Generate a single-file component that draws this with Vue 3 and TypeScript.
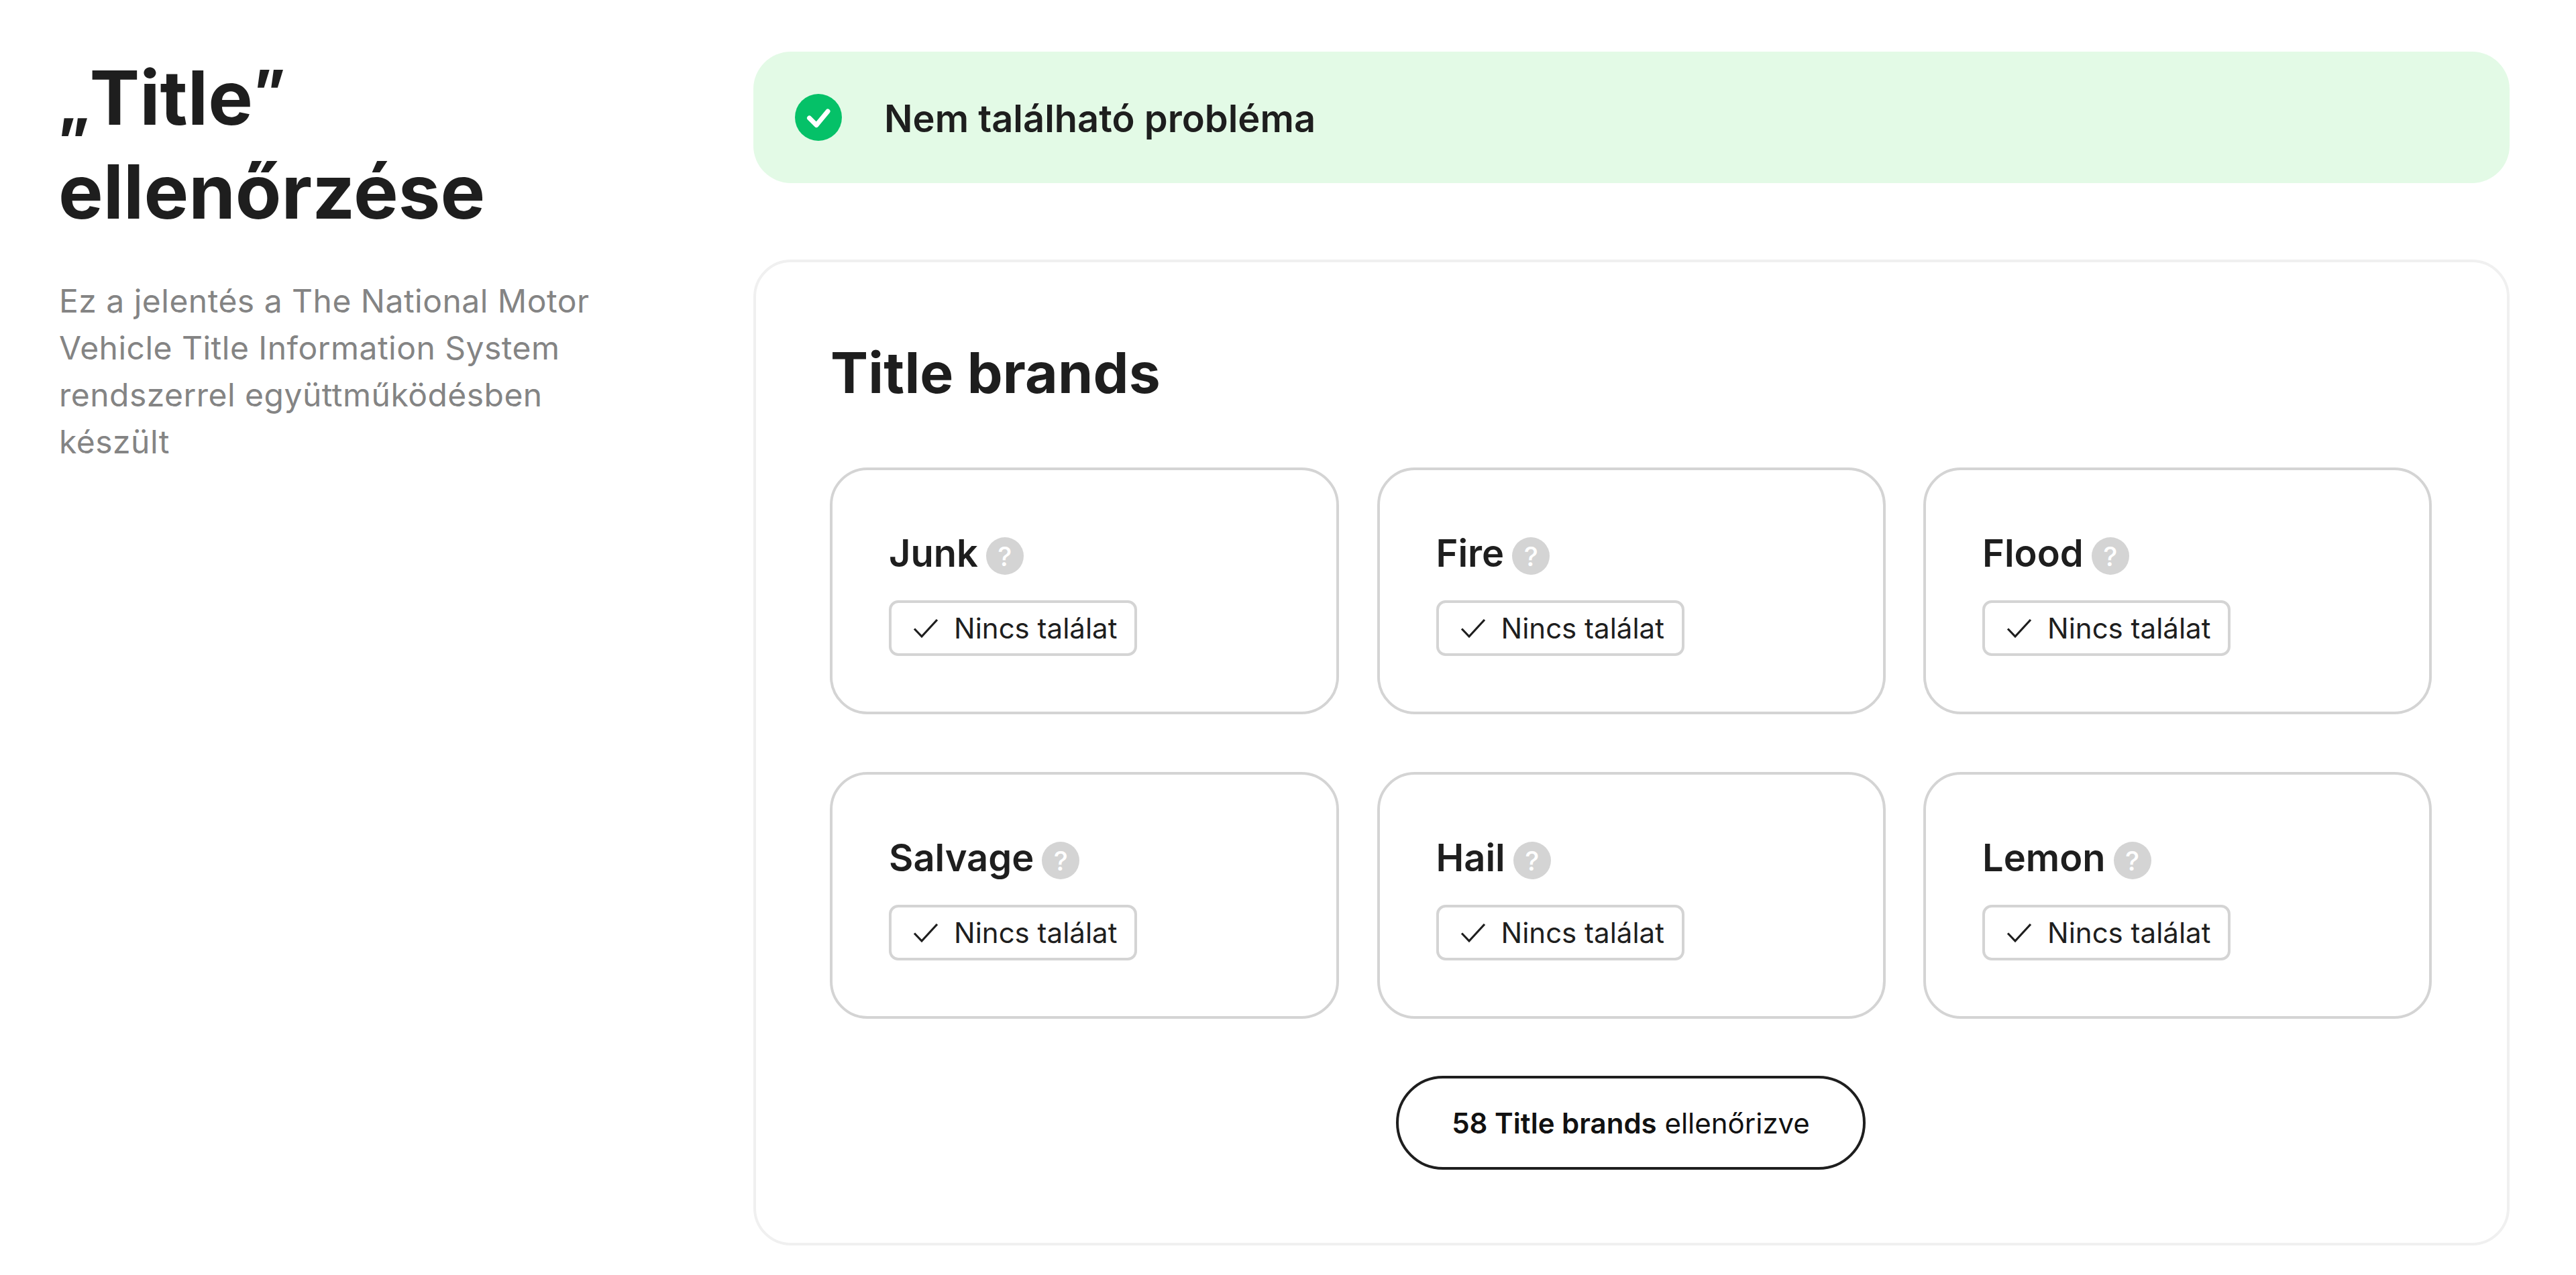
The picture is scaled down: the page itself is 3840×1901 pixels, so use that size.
<script setup lang="ts">
const brands: string[] = ['Junk', 'Fire', 'Flood', 'Salvage', 'Hail', 'Lemon']
</script>

<template>
  <div class="page">
    <aside class="side">
      <h1 class="heading"><span class="quote">„</span>Title<span class="quote quote-close">”</span> ellenőrzése</h1>
      <p class="lead">Ez a jelentés a The National Motor Vehicle Title Information System rendszerrel együttműködésben készült</p>
    </aside>
    <main class="main">
      <div class="alert">
        <svg class="alert-icon" viewBox="0 0 70 70" aria-hidden="true">
          <circle cx="35" cy="35" r="35" fill="#05c168" />
          <path d="M21.5 36 32 46.5 49 26" fill="none" stroke="#fff" stroke-width="7" stroke-linecap="round" stroke-linejoin="round" />
        </svg>
        <span class="alert-text">Nem található probléma</span>
      </div>
      <section class="panel">
        <h2 class="panel-title">Title brands</h2>
        <div class="grid">
          <article v-for="b in brands" :key="b" class="card">
            <div class="card-head">
              <span class="card-name">{{ b }}</span>
              <span class="help">?</span>
            </div>
            <div class="badge">
              <svg class="tick" viewBox="0 0 38 30" aria-hidden="true">
                <path d="M2 15.5 13 27 36 2" fill="none" stroke="#1e1e1e" stroke-width="3.2" />
              </svg>
              <span>Nincs találat</span>
            </div>
          </article>
        </div>
        <div class="pill-row">
          <div class="pill"><strong>58 Title brands</strong> ellenőrizve</div>
        </div>
      </section>
    </main>
  </div>
</template>

<style>
html, body { margin: 0; background: #fff; }
</style>

<style scoped>
.page {
  display: flex;
  box-sizing: border-box;
  width: 3840px;
  height: 1901px;
  padding: 77px 99px 44px 88px;
  font-family: Inter, "Noto Sans", sans-serif;
  color: #1e1e1e;
  background: #fff;
}
.side { width: 1035px; flex: none; }
.heading {
  margin: -2px 0 0 -1px;
  max-width: 820px;
  font-size: 112px;
  line-height: 140px;
  font-weight: 700;
}
.quote { font-size: 0.76em; font-weight: 800; line-height: 0; }
.quote-close { vertical-align: 20px; }
.lead {
  margin: 59px 0 0;
  max-width: 820px;
  font-size: 48px;
  line-height: 70px;
  font-weight: 400;
  letter-spacing: 0.01em;
  color: #848484;
}
.main { flex: 1; min-width: 0; display: flex; flex-direction: column; gap: 114px; }
.alert {
  display: flex;
  align-items: center;
  gap: 63px;
  height: 196px;
  padding: 0 62px;
  border-radius: 56px;
  background: #e3fae6;
}
.alert-icon { width: 70px; height: 70px; flex: none; }
.alert-text { padding-top: 4px; font-size: 56px; font-weight: 600; }
.panel {
  flex: 1;
  box-sizing: border-box;
  border: 4px solid #f0f0f0;
  border-radius: 56px;
  padding: 115px 112px 0 110px;
}
.panel-title { margin: 0 0 0 1px; font-size: 84px; line-height: 100px; font-weight: 700; letter-spacing: 0.2px; }
.grid {
  margin-top: 91px;
  display: grid;
  grid-template-columns: 759px 758px 758px;
  justify-content: space-between;
  row-gap: 86px;
}
.card {
  box-sizing: border-box;
  height: 368px;
  border: 4px solid #d4d4d4;
  border-radius: 56px;
  padding: 96px 84px 0;
}
.card-head { display: flex; align-items: center; gap: 12px; height: 64px; }
.card-name { padding-bottom: 8px; font-size: 56px; font-weight: 600; line-height: 64px; }
.help {
  display: flex;
  align-items: center;
  justify-content: center;
  width: 56px;
  height: 56px;
  border-radius: 50%;
  background: #d4d4d4;
  color: #fff;
  font-size: 40px;
  font-weight: 500;
}
.badge {
  display: inline-flex;
  align-items: center;
  box-sizing: border-box;
  height: 83px;
  margin-top: 34px;
  padding: 0 26px 0 32px;
  gap: 23px;
  border: 4px solid #d4d4d4;
  border-radius: 14px;
  font-size: 42px;
}
.tick { width: 38px; height: 30px; flex: none; }
.pill-row { display: flex; justify-content: center; margin-top: 85px; }
.pill {
  box-sizing: border-box;
  width: 700px;
  height: 140px;
  display: flex;
  align-items: center;
  justify-content: center;
  gap: 0.28em;
  border: 4px solid #1e1e1e;
  border-radius: 70px;
  font-size: 42px;
  color: #111;
}
.pill strong { font-weight: 600; }
</style>
